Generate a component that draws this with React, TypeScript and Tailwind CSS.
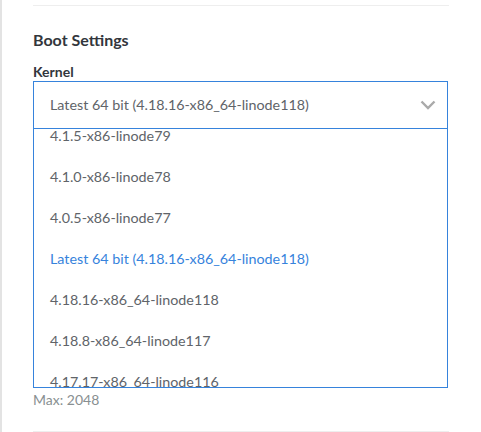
import React from "react";

const items: { label: string; active?: boolean }[] = [
  { label: "4.1.5-x86-linode79" },
  { label: "4.1.0-x86-linode78" },
  { label: "4.0.5-x86-linode77" },
  { label: "Latest 64 bit (4.18.16-x86_64-linode118)", active: true },
  { label: "4.18.16-x86_64-linode118" },
  { label: "4.18.8-x86_64-linode117" },
  { label: "4.17.17-x86_64-linode116" },
];

export default function App() {
  return (
    <div
      className="flex h-[432px] w-[481px] bg-white overflow-hidden"
      style={{ fontFamily: "Lato, 'Liberation Sans', sans-serif" }}
    >
      <div className="w-[2px] shrink-0 bg-[#e3e3e3]" />
      <div className="flex w-[415px] flex-col ml-[31px]">
        <div className="mt-[5px] h-px w-[416px] bg-[#eeeeee]" />
        <h2 className="mt-[24px] text-[16px] leading-[20px] font-bold text-[#32363c]">
          Boot Settings
        </h2>
        <label className="mt-[13px] text-[14px] leading-[18px] font-bold text-[#32363c]">
          Kernel
        </label>
        <div className="flex h-[48px] items-center justify-between border border-[#3683dc] pl-[16px] pr-[11px]">
          <span className="text-[14.3px] text-[#606469]">
            Latest 64 bit (4.18.16-x86_64-linode118)
          </span>
          <svg width="16" height="10" viewBox="0 0 16 10" fill="none">
            <path d="M1.5 1.5 L8 8 L14.5 1.5" stroke="#aaaaaa" strokeWidth="2.4" />
          </svg>
        </div>
        <div className="h-[259px] overflow-hidden border-x border-b border-[#3683dc] bg-white">
          <ul className="mt-[-14px]">
            {items.map((it) => (
              <li
                key={it.label}
                className={`flex h-[41px] items-center pl-[16px] text-[14.3px] ${
                  it.active ? "text-[#3683dc]" : "text-[#606469]"
                }`}
              >
                {it.label}
              </li>
            ))}
          </ul>
        </div>
        <div className="mt-[3px] text-[14px] leading-[18px] text-[#888f91]">Max: 2048</div>
        <div className="mt-auto h-px w-[416px] bg-[#eeeeee]" />
      </div>
    </div>
  );
}
